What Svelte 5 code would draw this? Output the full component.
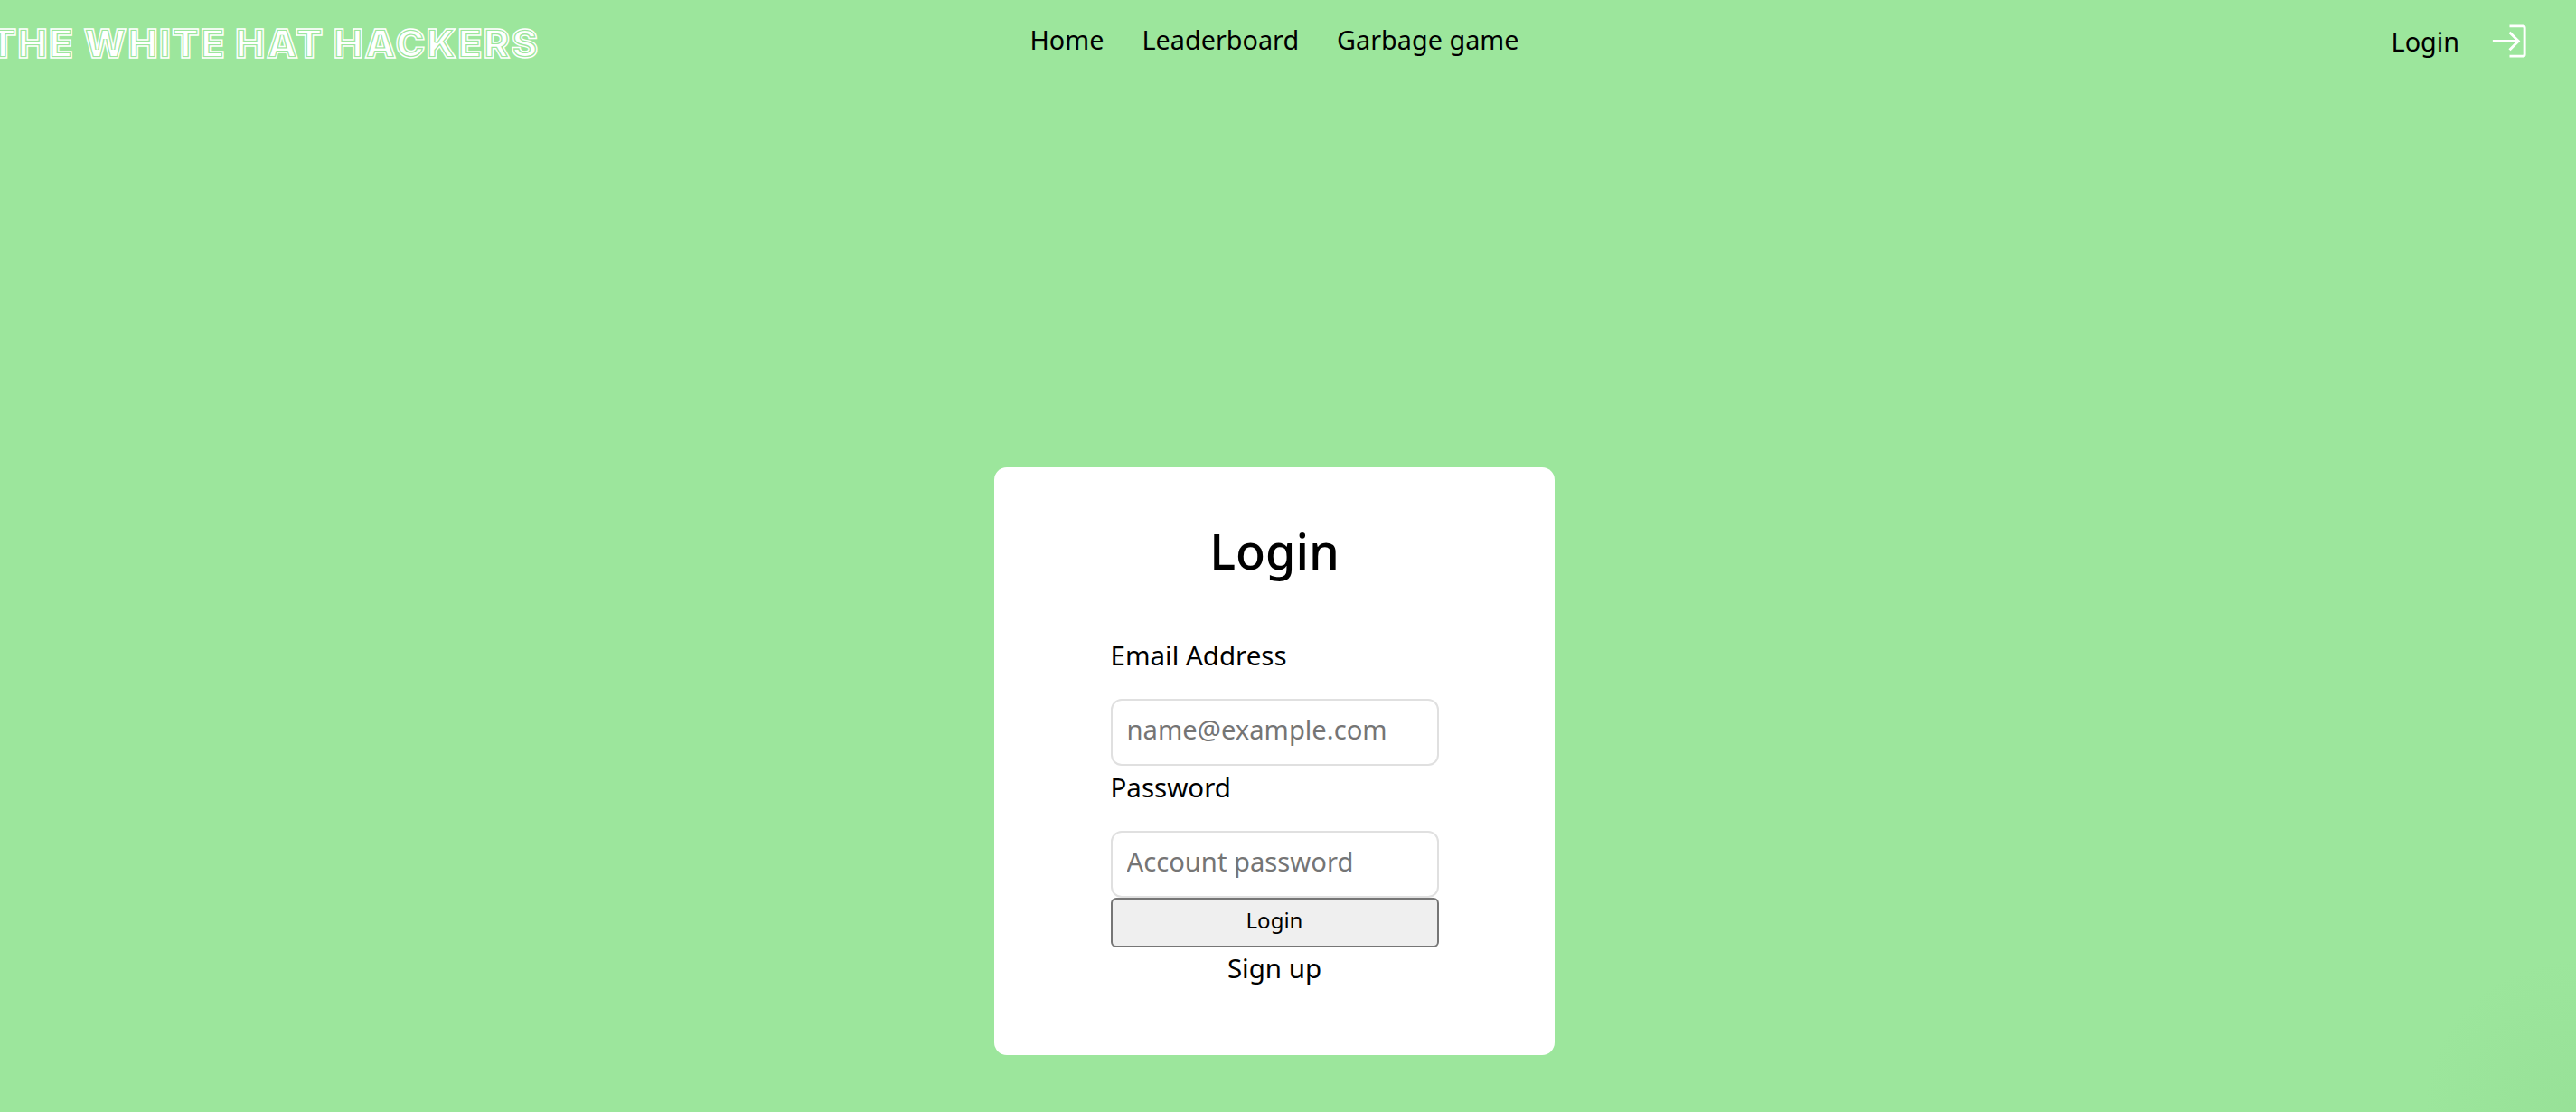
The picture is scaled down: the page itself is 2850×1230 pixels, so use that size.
<script lang="ts">
    const links = ["Home", "Leaderboard", "Garbage game"];
    const brand = "THE WHITE HAT HACKERS";
</script>

<div class="page">
    <header class="topbar">
        <div class="brand" data-text={brand}>{brand}</div>
        <nav class="links">
            {#each links as link}
                <a href="#top">{link}</a>
            {/each}
        </nav>
        <div class="account">
            <a href="#top">Login</a>
            <svg viewBox="0 0 48 48" width="47" height="47" fill="none" stroke="#fff" stroke-width="3" aria-hidden="true">
                <path d="M25 7h15a2 2 0 0 1 2 2v30a2 2 0 0 1-2 2H25" />
                <path d="M6 24h29M25 14l10 10-10 10" />
            </svg>
        </div>
    </header>

    <main class="content">
        <form class="card" onsubmit={(e) => e.preventDefault()}>
            <h1>Login</h1>
            <div class="fields">
                <label for="email">Email Address</label>
                <input id="email" type="email" placeholder="name@example.com" />
                <label for="password">Password</label>
                <input id="password" type="password" placeholder="Account password" />
                <button type="submit">Login</button>
                <a class="signup" href="#top">Sign up</a>
            </div>
        </form>
    </main>
</div>

<style>
:global(body) {
    margin: 0;
    background: radial-gradient(circle 170px at 100% 100%, rgba(120, 190, 120, 0.12), rgba(120, 190, 120, 0)) #9ce69c;
}

.page {
    width: 2820px;
    height: 1230px;
    color: #000;
    font-family: "Noto Sans", sans-serif;
    font-size: 28.8px;
    line-height: 43px;
    overflow: hidden;
}

a {
    color: inherit;
    text-decoration: none;
}

.topbar {
    display: grid;
    grid-template-columns: 1fr auto 1fr;
    height: 90px;
}

/* stacked outlines give the striped lettering */
.brand {
    position: relative;
    margin: 23px 0 0 -12px;
    font-family: Inter, sans-serif;
    font-weight: 900;
    font-size: 44px;
    line-height: 50px;
    letter-spacing: 1.4px;
    white-space: nowrap;
    color: #fff;
}

.brand::before,
.brand::after {
    content: attr(data-text);
    position: absolute;
    left: 0;
    top: 0;
}

.brand::before {
    -webkit-text-stroke: 4.2px #9ce69c;
}

.brand::after {
    color: transparent;
    -webkit-text-stroke: 1.4px #fff;
}

.links {
    display: flex;
    gap: 42px;
    padding-top: 22px;
}

.account {
    display: flex;
    justify-content: flex-end;
    align-items: flex-start;
    gap: 32px;
    padding-top: 24px;
    padding-right: 21px;
}

.account a {
    margin-right: -1px;
}

.account svg {
    margin-top: -2px;
}

.content {
    display: flex;
    justify-content: center;
    padding-top: 427px;
}

.card {
    box-sizing: border-box;
    width: 620px;
    height: 650px;
    padding-top: 50px;
    background: #fff;
    border-radius: 14px;
}

h1 {
    margin: 0 0 50px;
    font-size: 54px;
    font-weight: 500;
    line-height: 84px;
    text-align: center;
}

.fields {
    display: flex;
    flex-direction: column;
    width: 363px;
    margin: 0 auto;
}

label {
    height: 41px;
    padding-top: 2px;
    margin-bottom: 29px;
    font-size: 29.5px;
}

input {
    box-sizing: border-box;
    height: 74px;
    padding: 0 16px 7px;
    border: 2px solid #e0e0e0;
    border-radius: 12px;
    font: inherit;
    font-size: 29.2px;
    outline: none;
}

input::placeholder {
    color: #757575;
}

button {
    box-sizing: border-box;
    height: 55px;
    padding: 0 0 6px;
    background: #efefef;
    border: 2px solid #767676;
    border-radius: 6px;
    color: #000;
    font: inherit;
    font-size: 24px;
}

.signup {
    padding-top: 1px;
    font-size: 29.5px;
    text-align: center;
}
</style>
